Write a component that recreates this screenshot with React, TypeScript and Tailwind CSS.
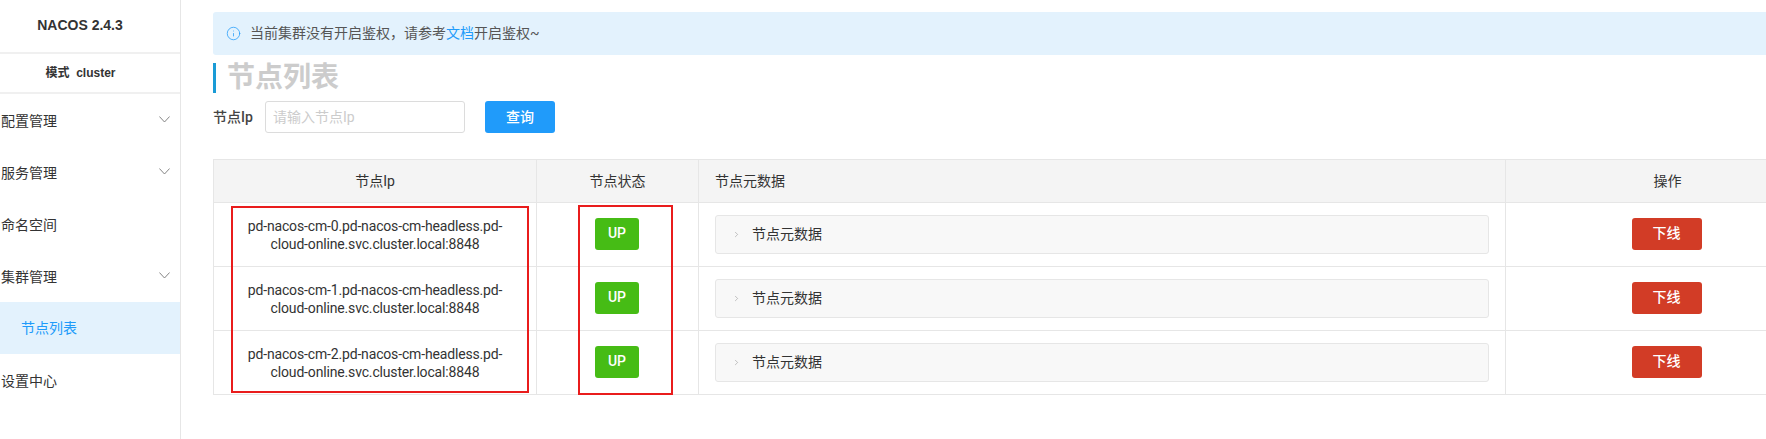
import { ChevronRight, Info } from "lucide-react"

const font = "font-['Roboto','Noto_Sans_CJK_SC',sans-serif]"

const menu = [
  { label: "配置管理", chevron: true },
  { label: "服务管理", chevron: true },
  { label: "命名空间", chevron: false },
  { label: "集群管理", chevron: true },
  { label: "节点列表", chevron: false, active: true },
  { label: "设置中心", chevron: false },
]

const nodes = [0, 1, 2]

export default function App() {
  return (
    <div className={`${font} relative flex h-[439px] w-[1766px] overflow-hidden bg-white text-[14px] text-[#333]`}>
      {/* Sidebar, cut off on the left in the screenshot */}
      <aside className="w-[181px] shrink-0 border-r border-[#e6e6e6]">
        <div className="flex h-[54px] items-center justify-center border-b-2 border-[#f0f0f0] pr-5 pb-[2px] font-['Liberation_Sans','Noto_Sans_CJK_SC',sans-serif] text-[14px] font-bold">
          NACOS 2.4.3
        </div>
        <div className="flex h-[40px] items-center justify-center border-b-2 border-[#f0f0f0] pl-[1px] pr-5 font-['Liberation_Sans','Noto_Sans_CJK_SC',sans-serif] text-[12px] font-bold">
          模式&nbsp;&nbsp;cluster
        </div>
        <nav>
          {menu.map((item) => (
            <div
              key={item.label}
              className={
                item.active
                  ? "flex h-[52px] items-center bg-[#e3f2fd] pl-[21px] text-[#209bfa]"
                  : "flex h-[52px] items-center justify-between pl-[1px] pr-[10px] pt-[2px]"
              }
            >
              <span>{item.label}</span>
              {item.chevron && (
                <svg width="11" height="7" viewBox="0 0 11 7" fill="none" className="-mt-[3px] text-[#777]">
                  <path d="M0.4 0.5 L5.5 6 L10.6 0.5" stroke="currentColor" strokeWidth="0.9" />
                </svg>
              )}
            </div>
          ))}
        </nav>
      </aside>

      <main className="min-w-0 flex-1 pl-8 pt-3">
        {/* Auth notice */}
        <div className="flex h-[43px] items-center rounded-l-[3px] bg-[#e3f2fd] pl-[13px] text-[#555]">
          <Info size={15} strokeWidth={1.2} className="text-[#209bfa]" />
          <span className="ml-[9px]">
            当前集群没有开启鉴权，请参考<span className="text-[#209bfa]">文档</span>开启鉴权~
          </span>
        </div>

        <h1 className="mt-2 flex h-[30px] items-center border-l-[3px] border-[#1a9bd6] pl-[11px] text-[28px] font-bold text-[#ccc]">
          节点列表
        </h1>

        {/* Search form */}
        <div className="mt-2 flex items-center">
          <label className="w-[52px] font-medium text-[#444]">节点Ip</label>
          <input
            placeholder="请输入节点Ip"
            className="h-8 w-[200px] rounded-[3px] border border-[#dcdcdc] px-[7px] text-[14px] outline-none placeholder:text-[#ccc]"
          />
          <button className="ml-5 h-8 w-[70px] rounded-[3px] bg-[#209bfa] font-medium text-white">查询</button>
        </div>

        {/* Node table runs past the window's right edge */}
        <table className="mt-[26px] w-[1616px] table-fixed border-collapse">
          <colgroup>
            <col className="w-[323px]" />
            <col className="w-[162px]" />
            <col className="w-[807px]" />
            <col className="w-[324px]" />
          </colgroup>
          <thead>
            <tr className="h-[43px] bg-[#f4f4f4]">
              <th className="border border-[#e6e6e6] font-normal">节点Ip</th>
              <th className="border border-[#e6e6e6] font-normal">节点状态</th>
              <th className="border border-[#e6e6e6] pl-4 text-left font-normal">节点元数据</th>
              <th className="border border-[#e6e6e6] font-normal">操作</th>
            </tr>
          </thead>
          <tbody>
            {nodes.map((n) => (
              <tr key={n} className="h-[64px]">
                <td className="border border-[#e6e6e6] px-4 text-center leading-[18px] tracking-[-0.16px]">
                  {`pd-nacos-cm-${n}.pd-nacos-cm-headless.pd-cloud-online.svc.cluster.local:8848`}
                </td>
                <td className="border border-[#e6e6e6] pl-[58px] pb-[2px]">
                  <span className="flex h-8 w-[44px] items-center justify-center rounded-[3px] bg-[#46bc15] font-medium text-white">
                    UP
                  </span>
                </td>
                <td className="border border-[#e6e6e6] px-4">
                  <div className="flex h-[39px] items-center rounded-[3px] border border-[#e6e6e6] bg-[#f8f8f8]">
                    <ChevronRight size={9} strokeWidth={1} className="ml-4 text-[#666]" />
                    <span className="ml-[11px]">节点元数据</span>
                  </div>
                </td>
                <td className="border border-[#e6e6e6] pr-[2px] pb-[2px] text-center">
                  <button className="h-8 w-[70px] rounded-[3px] bg-[#d23c26] font-medium text-white">下线</button>
                </td>
              </tr>
            ))}
          </tbody>
        </table>
      </main>

      {/* Red annotation boxes drawn over the screenshot */}
      <div className="absolute left-[231px] top-[206px] h-[187px] w-[298px] border-2 border-[#e91c1c]" />
      <div className="absolute left-[578px] top-[205px] h-[190px] w-[95px] border-2 border-[#e91c1c]" />
    </div>
  )
}
